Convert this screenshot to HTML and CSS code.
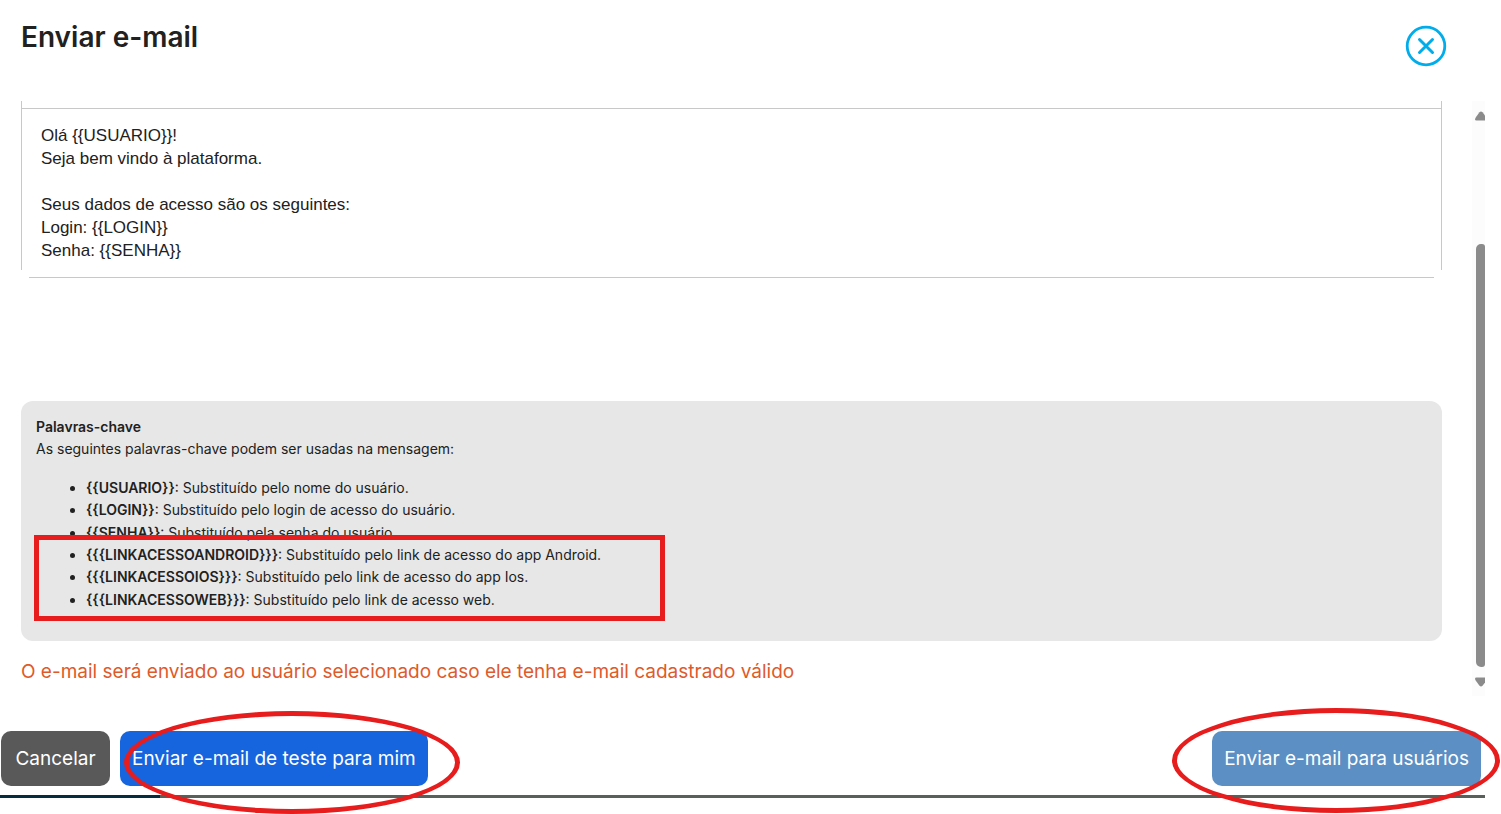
FILE: index.html
```html
<!DOCTYPE html>
<html lang="pt-BR">
<head>
  <meta charset="UTF-8" />
  <meta name="viewport" content="width=device-width, initial-scale=1.0"/>
  <title>Enviar e-mail</title>
  <link rel="stylesheet" href="styles.css">
</head>
<body>
  <main class="modal">
    <header class="modal-header">
      <h1>Enviar e-mail</h1>
      <button type="button" class="close-button" aria-label="Fechar">
        <svg viewBox="0 0 42 42" width="42" height="42" fill="none" stroke="#00adea">
          <circle cx="21" cy="21" r="18.800" stroke-width="2.800"/>
          <path d="M14.500 14.500 L27.500 27.500 M27.500 14.500 L14.500 27.500" stroke-width="3" stroke-linecap="round"/>
        </svg>
      </button>
    </header>

    <div class="modal-body">
      <div class="content">
        <div class="editor">
          <div class="editor-toolbar"></div>
          <textarea class="editor-text" rows="6" aria-label="Mensagem">Olá {{USUARIO}}!
Seja bem vindo à plataforma.

Seus dados de acesso são os seguintes:
Login: {{LOGIN}}
Senha: {{SENHA}}</textarea>
        </div>

        <section class="keywords">
          <h2>Palavras-chave</h2>
          <p>As seguintes palavras-chave podem ser usadas na mensagem:</p>
          <ul>
            <li><b>{{USUARIO}}</b>: Substituído pelo nome do usuário.</li>
            <li><b>{{LOGIN}}</b>: Substituído pelo login de acesso do usuário.</li>
            <li><b>{{SENHA}}</b>: Substituído pela senha do usuário.</li>
            <li><b>{{{LINKACESSOANDROID}}}</b>: Substituído pelo link de acesso do app Android.</li>
            <li><b>{{{LINKACESSOIOS}}}</b>: Substituído pelo link de acesso do app Ios.</li>
            <li><b>{{{LINKACESSOWEB}}}</b>: Substituído pelo link de acesso web.</li>
          </ul>
          <span class="mark mark-box"></span>
        </section>

        <p class="warning">O e-mail será enviado ao usuário selecionado caso ele tenha e-mail cadastrado válido</p>
      </div>

      <div class="scrollbar">
        <svg viewBox="0 0 13 10" width="13" height="10" fill="#8b8b8b">
          <path d="M3 8.500 Q3 7.500 4 6 L7.500 1.200 Q9 -0.200 10.500 1.200 L13 4.500 V9.500 H4.500 Q3 9.500 3 8.500Z"/>
        </svg>
        <div class="scrollbar-track">
          <div class="scrollbar-thumb"></div>
        </div>
        <svg viewBox="0 0 13 10" width="13" height="10" fill="#8b8b8b">
          <path d="M3 1.500 Q3 2.500 4 4 L7.500 8.800 Q9 10.200 10.500 8.800 L13 5.500 V0.500 H4.500 Q3 0.500 3 1.500Z"/>
        </svg>
      </div>
    </div>

    <footer class="modal-footer">
      <div class="action">
        <button type="button" class="btn btn-cancel">Cancelar</button>
      </div>
      <div class="action">
        <button type="button" class="btn btn-test">Enviar e-mail de teste para mim</button>
        <span class="mark mark-test"></span>
      </div>
      <div class="action action-last">
        <button type="button" class="btn btn-send">Enviar e-mail para usuários</button>
        <span class="mark mark-send"></span>
      </div>
    </footer>
    <div class="page-edge"></div>
  </main>
</body>
</html>
```
FILE: styles.css
```css
:root {
  --text-color: #212121;
  --border-color: #c8c8c8;
  --mark-color: #e71c1c;
  --scroll-color: #8b8b8b;
}

* {
  box-sizing: border-box;
}

body {
  margin: 0;
  font-family: Inter, sans-serif;
  font-size: 14px;
  line-height: 1.6;
  color: var(--text-color);
  background: #fff;
  overflow-x: hidden;
}

h1, h2, p, ul {
  margin: 0;
}

.modal {
  margin-right: 16px;
  padding-bottom: 16px;
}

.modal-header {
  display: flex;
  justify-content: space-between;
  align-items: flex-start;
  padding: 16px 38px 0 21px;
  height: 101px;
}

h1 {
  font-size: 28px;
  font-weight: 600;
  line-height: 42px;
}

.close-button {
  display: flex;
  margin-top: 9px;
  padding: 0;
  border: none;
  background: none;
  cursor: pointer;
}

.modal-body {
  display: flex;
}

.content {
  flex: 1;
  padding: 0 30px 9px 21px;
}

/* message editor */
.editor {
  position: relative;
  height: 177px;
  border: 1px solid var(--border-color);
  border-top: none;
}

/* the corners of the frame stay open */
.editor::before,
.editor::after {
  content: "";
  position: absolute;
  bottom: -1px;
  width: 8px;
  height: 8px;
  background: #fff;
}

.editor::before {
  left: -1px;
}

.editor::after {
  right: -1px;
}

.editor-toolbar {
  height: 8px;
  border-bottom: 1px solid var(--border-color);
}

.editor-text {
  display: block;
  width: 100%;
  padding: 15px 19px;
  border: none;
  outline: none;
  resize: none;
  background: transparent;
  color: var(--text-color);
  font-family: "Liberation Sans", Arial, sans-serif;
  font-size: 17px;
  line-height: 23px;
}

/* keyword help */
.keywords {
  position: relative;
  margin-top: 123px;
  padding: 15px;
  border-radius: 12px;
  background: #e7e7e7;
}

.keywords h2 {
  font-size: 14px;
  font-weight: 600;
}

.keywords ul {
  margin: 16px 0 15px;
  padding-left: 50px;
}

.keywords b {
  font-weight: 600;
}

.warning {
  margin-top: 16px;
  font-size: 19px;
  line-height: 30px;
  color: #df5a2b;
}

/* scrollbar */
.scrollbar {
  display: flex;
  flex-direction: column;
  width: 13px;
  padding: 10px 0 9px;
  background: #fcfcfc;
}

.scrollbar-track {
  flex: 1;
  display: flex;
  flex-direction: column;
  padding: 123px 0 10px 4px;
}

.scrollbar-thumb {
  flex: 1;
  border-radius: 5px 3px 3px 5px;
  background: var(--scroll-color);
}

/* footer buttons */
.modal-footer {
  display: flex;
  gap: 10px;
  padding: 35px 4px 9px 1px;
}

.action {
  position: relative;
}

.action-last {
  margin-left: auto;
}

.btn {
  display: block;
  min-width: 109px;
  height: 55px;
  padding: 0 12px;
  border: none;
  border-radius: 10px;
  color: #fff;
  font-family: inherit;
  font-size: 19px;
  cursor: pointer;
}

.btn-cancel {
  background: #595959;
}

.btn-test {
  background: #1665df;
}

.btn-send {
  background: #5c8fc3;
}

.page-edge {
  height: 3px;
  background: linear-gradient(to right, #062c40 160px, #595f59 160px);
}

/* red marks drawn over the content */
.mark {
  position: absolute;
  border: 5px solid var(--mark-color);
  pointer-events: none;
}

.mark-box {
  left: 13px;
  top: 134px;
  width: 631px;
  height: 86px;
}

.mark-test {
  left: 4px;
  right: -32px;
  top: -20px;
  bottom: -28px;
  border-radius: 50%;
}

.mark-send {
  left: -40px;
  right: -19px;
  top: -23px;
  bottom: -27px;
  border-radius: 50%;
}
```
